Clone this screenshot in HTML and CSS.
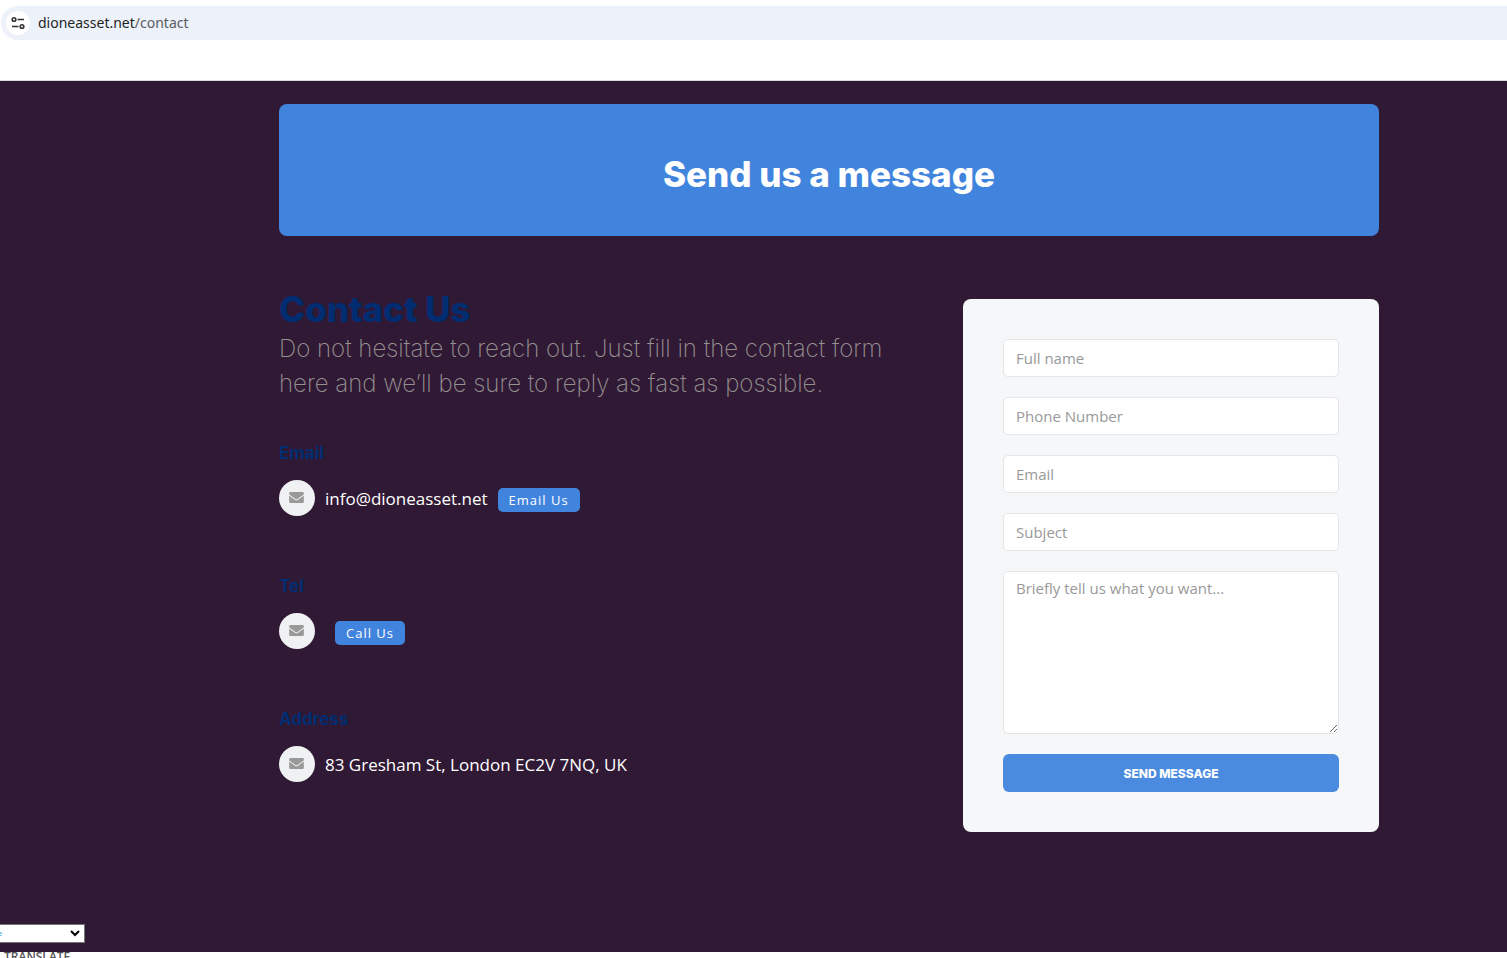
FILE: index.html
```
<!DOCTYPE html>
<html lang="en">
<head>
    <meta charset="UTF-8">
    <meta name="viewport" content="width=device-width, initial-scale=1.0">
    <title>Contact Us</title>
    <link rel="stylesheet" href="styles.css">
</head>
<body>
    <svg class="symbols" aria-hidden="true">
        <symbol id="envelope" viewBox="0 0 512 384">
            <path d="M502 127c4-3 10 0 10 4v205c0 26-22 48-48 48H48c-26 0-48-22-48-48V131c0-5 6-7 10-4 22 17 52 39 155 114 21 15 57 48 91 48 34 0 71-33 91-48 103-75 133-97 155-114zM256 256c23 0 57-29 74-42 134-97 144-105 175-129 6-5 9-12 9-19V48c0-26-22-48-48-48H48C22 0 0 22 0 48v18c0 7 3 14 9 19 31 24 41 32 175 129 17 13 49 42 72 42z"/>
        </symbol>
    </svg>

    <header class="browser">
        <div class="address-bar">
            <button class="site-info" aria-label="View site information">
                <svg width="14" height="14" viewBox="0 0 14 14" fill="none" stroke="#303236" stroke-width="1.6">
                    <circle cx="3" cy="3.5" r="1.8"/>
                    <path d="M6.5 3.5H13M1 10.5h6.5"/>
                    <circle cx="11" cy="10.5" r="1.8"/>
                </svg>
            </button>
            <div class="url">dioneasset.net<span>/contact</span></div>
        </div>
    </header>

    <main>
        <div class="container">
            <section class="banner">
                <h1>Send us a message</h1>
            </section>

            <div class="columns">
                <section class="contact">
                    <h2>Contact Us</h2>
                    <p class="intro">Do not hesitate to reach out. Just fill in the contact form here and we’ll be sure to reply as fast as possible.</p>

                    <div class="item">
                        <h3>Email</h3>
                        <div class="row">
                            <span class="icon"><svg><use href="#envelope"/></svg></span>
                            <span class="value">info@dioneasset.net</span>
                            <a class="action" href="mailto:info@dioneasset.net">Email Us</a>
                        </div>
                    </div>
                    <div class="item">
                        <h3>Tel</h3>
                        <div class="row">
                            <span class="icon"><svg><use href="#envelope"/></svg></span>
                            <a class="action action-only" href="tel:">Call Us</a>
                        </div>
                    </div>
                    <div class="item">
                        <h3>Address</h3>
                        <div class="row">
                            <span class="icon"><svg><use href="#envelope"/></svg></span>
                            <span class="value">83 Gresham St, London EC2V 7NQ, UK</span>
                        </div>
                    </div>
                </section>

                <form class="message-form">
                    <input type="text" name="name" placeholder="Full name" aria-label="Full name">
                    <input type="tel" name="phone" placeholder="Phone Number" aria-label="Phone Number">
                    <input type="email" name="email" placeholder="Email" aria-label="Email">
                    <input type="text" name="subject" placeholder="Subject" aria-label="Subject">
                    <textarea name="message" placeholder="Briefly tell us what you want..." aria-label="Message"></textarea>
                    <button type="submit">SEND MESSAGE</button>
                </form>
            </div>
        </div>

        <select class="language" aria-label="Language">
            <option>Select Language</option>
        </select>
    </main>

    <footer class="translate">TRANSLATE</footer>
</body>
</html>
```

FILE: styles.css
```
* {
    box-sizing: border-box;
}

body {
    display: flex;
    flex-direction: column;
    height: 100vh;
    margin: 0;
    overflow: hidden;
    background-color: #fff;
    font-family: "Open Sans", sans-serif;
}

h1, h2, h3, p {
    margin: 0;
}

.symbols {
    display: none;
}

.browser {
    padding: 6px 0 40px 1px;
    border-bottom: 1px solid #d5dfd8;
}

.address-bar {
    display: flex;
    align-items: center;
    gap: 8px;
    height: 34px;
    padding-left: 5px;
    background-color: #ecf1fa;
    border-radius: 17px 0 0 17px;
}

.site-info {
    display: flex;
    align-items: center;
    justify-content: center;
    width: 24px;
    height: 24px;
    padding: 0;
    background-color: #fff;
    border: none;
    border-radius: 50%;
}

.url {
    padding-bottom: 2px;
    color: #1f1f1f;
    font-family: "Noto Sans", sans-serif;
    font-size: 14px;
}

.url span {
    color: #5a5d61;
}

main {
    display: flex;
    flex: 1;
    flex-direction: column;
    background-color: #301934;
}

.container {
    padding: 23px 128px 0 279px;
}

.banner {
    padding: 48px 20px 40px;
    background-color: #4184dd;
    border-radius: 8px;
    text-align: center;
}

.banner h1 {
    color: #fff;
    font-family: Inter, sans-serif;
    font-size: 35px;
    font-weight: 800;
    line-height: 44px;
}

.columns {
    display: flex;
    align-items: flex-start;
    gap: 44px;
    padding-top: 52px;
}

.contact {
    flex: 1;
}

.contact h2 {
    color: #002d72;
    font-family: Inter, sans-serif;
    font-size: 35px;
    font-weight: 800;
    line-height: 42px;
}

.intro {
    margin: 1px 0 41px;
    color: #969191;
    font-family: Inter, sans-serif;
    font-size: 24px;
    font-weight: 200;
    line-height: 35px;
}

.item {
    margin-bottom: 59px;
}

.item h3 {
    margin-bottom: 16px;
    color: #002d72;
    font-family: Inter, sans-serif;
    font-size: 17px;
    font-weight: 700;
    line-height: 22px;
}

.row {
    display: flex;
    align-items: center;
    height: 36px;
}

.icon {
    display: flex;
    align-items: center;
    justify-content: center;
    width: 36px;
    height: 36px;
    margin-right: 10px;
    padding: 0 2px 2px 0;
    background-color: #f0f1f3;
    border-radius: 50%;
}

.icon svg {
    width: 15px;
    height: 11px;
    fill: #999;
}

.value {
    margin-right: 10px;
    color: #fff;
    font-size: 17px;
}

.action {
    margin-top: 4px;
    padding: 0 11px;
    background-color: #4184dd;
    border-radius: 5px;
    color: #fff;
    font-size: 13px;
    letter-spacing: 1px;
    line-height: 24px;
    text-decoration: none;
}

.action-only {
    margin-left: 10px;
}

.message-form {
    display: flex;
    flex-direction: column;
    gap: 20px;
    width: 416px;
    margin-top: 11px;
    padding: 40px;
    background-color: #f6f7f9;
    border-radius: 8px;
}

.message-form input,
.message-form textarea {
    width: 100%;
    height: 38px;
    padding: 6px 12px;
    background-color: #fff;
    border: 1px solid #e4e5e6;
    border-radius: 5px;
    font-family: "Open Sans", sans-serif;
    font-size: 15px;
}

.message-form textarea {
    height: 163px;
}

.message-form ::placeholder {
    color: #999;
}

.message-form button {
    height: 38px;
    background-color: #4a8bdf;
    border: none;
    border-radius: 6px;
    color: #fff;
    font-family: Inter, sans-serif;
    font-size: 12px;
    font-weight: 800;
    cursor: pointer;
}

/* the language picker hangs off the left edge */
.language {
    width: 149px;
    height: 19px;
    margin: auto 0 9px -64px;
    padding: 0 0 0 5px;
    appearance: none;
    background: #fff url("data:image/svg+xml,%3Csvg xmlns='http://www.w3.org/2000/svg' width='10' height='7' fill='none' stroke='black' stroke-width='2'%3E%3Cpath d='M1 1l4 4 4-4'/%3E%3C/svg%3E") no-repeat right 4px center;
    border: 1px solid #767676;
    border-radius: 0;
    color: #1a9be8;
    font-family: "Liberation Sans", sans-serif;
    font-size: 8px;
}

.translate {
    height: 6px;
    padding-left: 4px;
    overflow: hidden;
    color: #555;
    font-size: 12px;
    font-weight: 600;
    line-height: 10px;
}
```
